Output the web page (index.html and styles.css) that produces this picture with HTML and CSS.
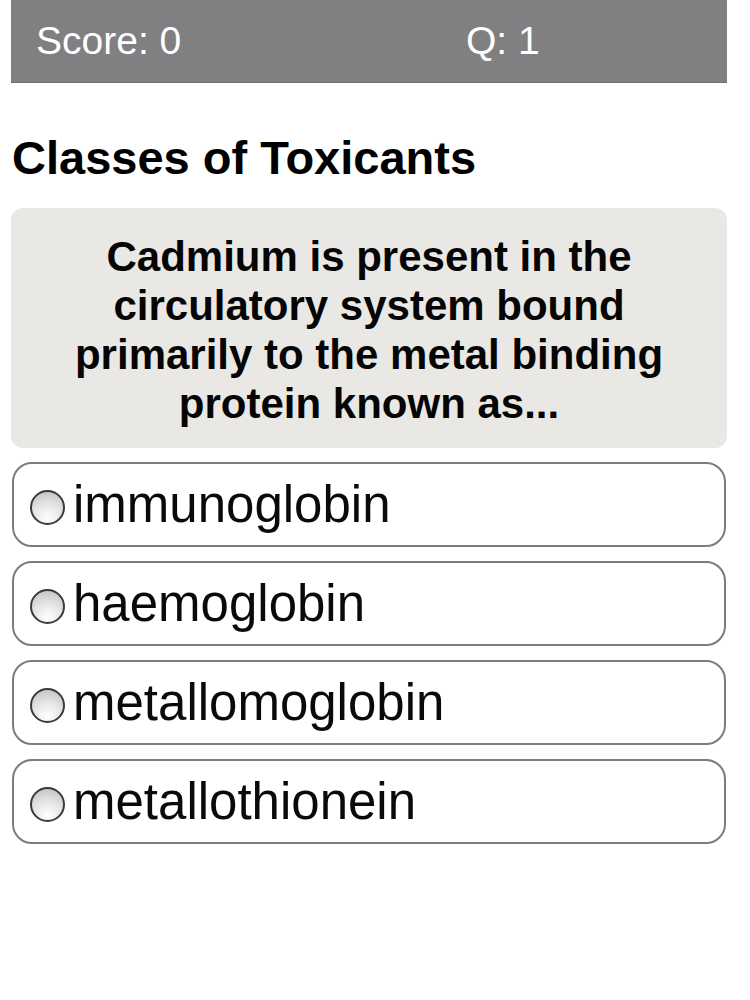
FILE: index.html
```html
<!DOCTYPE html>
<html>
<head>
<meta charset="utf-8">
<link rel="stylesheet" href="styles.css">
</head>
<body>
<div class="page">
  <div class="topbar">
    <span class="score">Score: 0</span>
    <span class="qnum">Q: 1</span>
  </div>
  <h1 class="title">Classes of Toxicants</h1>
  <div class="question">Cadmium is present in the circulatory system bound primarily to the metal binding protein known as...</div>
  <div class="options">
    <label class="option"><span class="radio"></span><span class="opt-text">immunoglobin</span></label>
    <label class="option"><span class="radio"></span><span class="opt-text">haemoglobin</span></label>
    <label class="option"><span class="radio"></span><span class="opt-text">metallomoglobin</span></label>
    <label class="option"><span class="radio"></span><span class="opt-text">metallothionein</span></label>
  </div>
</div>
</body>
</html>
```

FILE: styles.css
```css
html, body {
  margin: 0;
  padding: 0;
  background: #ffffff;
}

body {
  font-family: "Liberation Sans", Arial, Helvetica, sans-serif;
  color: #000;
}

.page {
  width: 716px;
  margin-left: 11px;
}

.topbar {
  height: 83px;
  background: #807f82;
  display: grid;
  grid-template-columns: 430px 1fr;
  align-items: center;
  padding-left: 25px;
  box-sizing: border-box;
  color: #ffffff;
  font-size: 39px;
  border-bottom: 1px solid #6f6e71;
}

.title {
  margin: 48px 0 24px 1px;
  font-size: 47px;
  font-weight: bold;
  line-height: 53px;
}

.question {
  background: #e9e8e4;
  border-radius: 12px;
  padding: 24px 30px 20px;
  font-size: 42px;
  font-weight: bold;
  line-height: 49px;
  text-align: center;
  color: #050505;
}

.options {
  display: flex;
  flex-direction: column;
  gap: 14px;
  margin-top: 14px;
  padding: 0 1px;
}

.option {
  height: 85px;
  box-sizing: border-box;
  border: 2px solid #7c7c7c;
  border-radius: 20px;
  display: flex;
  align-items: center;
  padding-left: 16px;
  background: #fff;
}

.radio {
  width: 31px;
  height: 31px;
  border-radius: 50%;
  border: 2px solid #3a3a3a;
  background: radial-gradient(circle at 50% 85%, #ffffff 0%, #e6e6e6 45%, #bdbdbd 100%);
  flex: none;
  margin-right: 8px;
  margin-top: 6px;
}

.opt-text {
  font-size: 51px;
  line-height: 60px;
  color: #0a0a0a;
}
```
